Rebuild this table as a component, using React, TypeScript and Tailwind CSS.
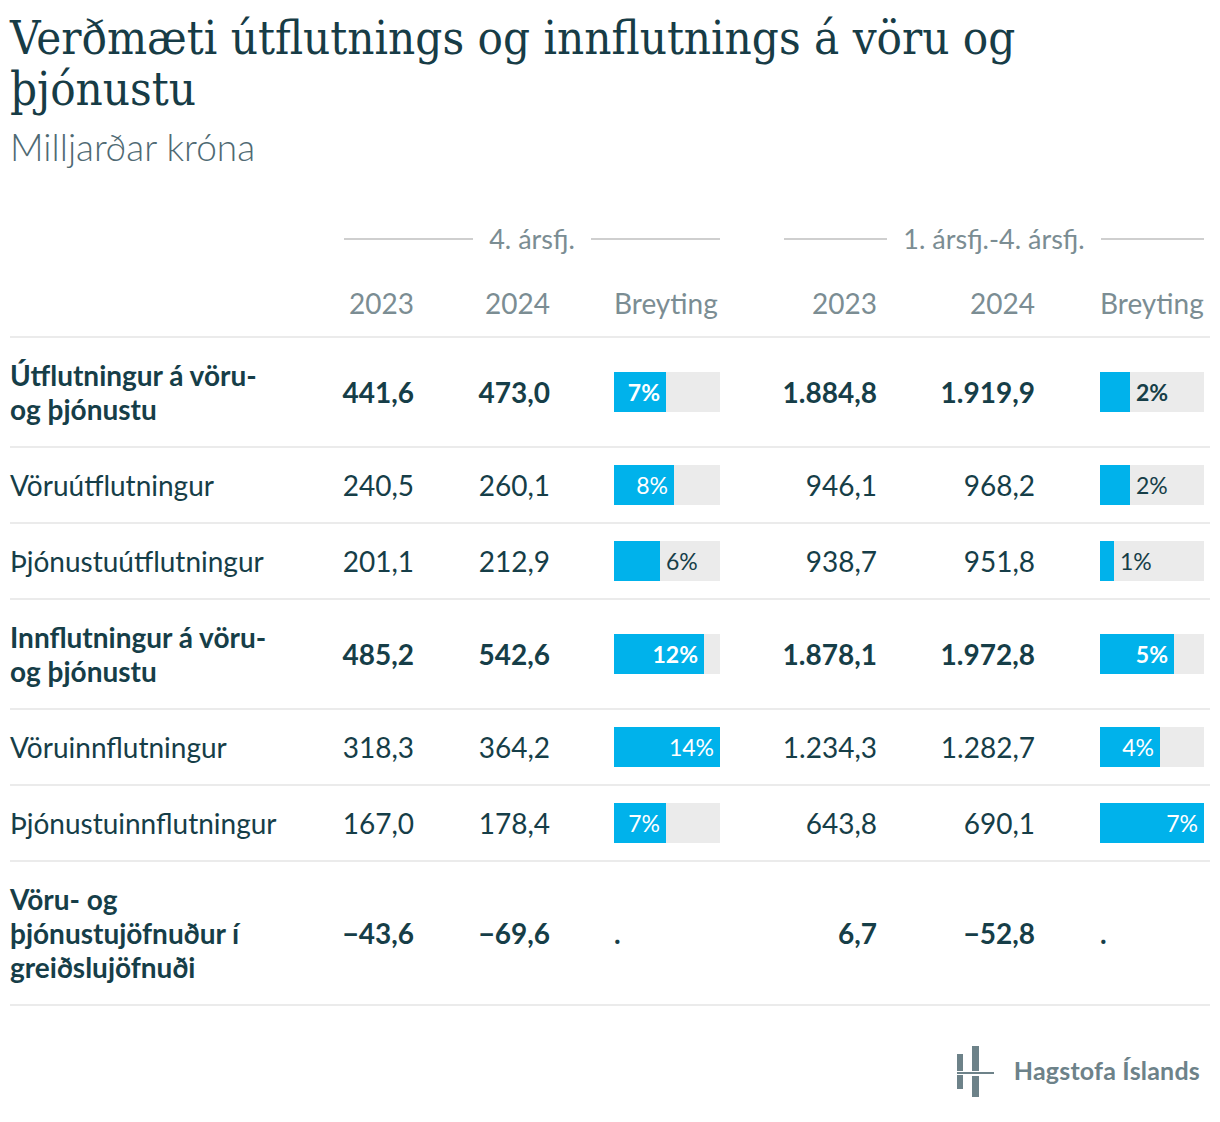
import React from 'react';

type Bar = { pct: string; w: number; inside: boolean };

interface Row {
  label: string;
  bold?: boolean;
  q23: string;
  q24: string;
  qBar: Bar | null;
  y23: string;
  y24: string;
  yBar: Bar | null;
}

const rows: Row[] = [
  {
    label: 'Útflutningur á vöru- og þjónustu',
    bold: true,
    q23: '441,6',
    q24: '473,0',
    qBar: { pct: '7%', w: 52, inside: true },
    y23: '1.884,8',
    y24: '1.919,9',
    yBar: { pct: '2%', w: 30, inside: false },
  },
  {
    label: 'Vöruútflutningur',
    q23: '240,5',
    q24: '260,1',
    qBar: { pct: '8%', w: 60, inside: true },
    y23: '946,1',
    y24: '968,2',
    yBar: { pct: '2%', w: 30, inside: false },
  },
  {
    label: 'Þjónustuútflutningur',
    q23: '201,1',
    q24: '212,9',
    qBar: { pct: '6%', w: 46, inside: false },
    y23: '938,7',
    y24: '951,8',
    yBar: { pct: '1%', w: 14, inside: false },
  },
  {
    label: 'Innflutningur á vöru- og þjónustu',
    bold: true,
    q23: '485,2',
    q24: '542,6',
    qBar: { pct: '12%', w: 90, inside: true },
    y23: '1.878,1',
    y24: '1.972,8',
    yBar: { pct: '5%', w: 74, inside: true },
  },
  {
    label: 'Vöruinnflutningur',
    q23: '318,3',
    q24: '364,2',
    qBar: { pct: '14%', w: 106, inside: true },
    y23: '1.234,3',
    y24: '1.282,7',
    yBar: { pct: '4%', w: 60, inside: true },
  },
  {
    label: 'Þjónustuinnflutningur',
    q23: '167,0',
    q24: '178,4',
    qBar: { pct: '7%', w: 52, inside: true },
    y23: '643,8',
    y24: '690,1',
    yBar: { pct: '7%', w: 104, inside: true },
  },
  {
    label: 'Vöru- og þjónustujöfnuður í greiðslujöfnuði',
    bold: true,
    q23: '−43,6',
    q24: '−69,6',
    qBar: null,
    y23: '6,7',
    y24: '−52,8',
    yBar: null,
  },
];

const cols = 'grid grid-cols-[285px_119px_136px_170px_157px_158px_169px]';

function BarCell({ bar, total, bold }: { bar: Bar | null; total: number; bold?: boolean }) {
  if (!bar) {
    return <span className="text-[28px] leading-[34px]">.</span>;
  }
  // bar is taller than the text line, it spills into the row padding
  return (
    <div className="flex h-[34px] items-center">
      <div className="flex h-10 shrink-0 bg-[#ebebeb]" style={{ width: total }}>
        <div
          className="flex h-10 items-center justify-end bg-[#00b2eb] pr-[6px]"
          style={{ width: bar.w }}
        >
          {bar.inside && (
            <span className={`text-[23px] text-white ${bold ? 'font-bold' : ''}`}>{bar.pct}</span>
          )}
        </div>
        {!bar.inside && (
          <span className={`flex items-center pl-[6px] text-[23px] ${bold ? 'font-bold' : ''}`}>
            {bar.pct}
          </span>
        )}
      </div>
    </div>
  );
}

function Logo() {
  return (
    <div className="flex items-center gap-[19px]">
      <svg width="40" height="52" viewBox="0 0 40 52">
        <rect x="2" y="9" width="6" height="17" fill="#6d8289" />
        <rect x="2" y="30" width="6" height="14" fill="#6d8289" />
        <rect x="17" y="1" width="7" height="25" fill="#6d8289" />
        <rect x="17" y="31" width="7" height="21" fill="#6d8289" />
        <rect x="2" y="27" width="37" height="2" fill="#6d8289" />
      </svg>
      <span className="text-[25px] font-bold tracking-[0.2px] text-[#6d8289]">Hagstofa Íslands</span>
    </div>
  );
}

export default function App() {
  return (
    <div className="h-[1122px] w-[1220px] bg-white px-[10px] pt-3 font-['Lato',sans-serif] text-[#163e48]">
      <h1 className="max-w-[1040px] font-['DejaVu_Serif_Condensed','DejaVu_Serif',serif] text-[47px] leading-[51px] text-[#173c46]">
        Verðmæti útflutnings og innflutnings á vöru og þjónustu
      </h1>
      <p className="mt-[13px] text-[37px] font-light leading-10 text-[#4f6a73]">Milljarðar króna</p>

      <div className="mt-[52px]">
        {/* Group headers */}
        <div className={`${cols} h-[30px] items-center text-[27px] text-[#7b8d93]`}>
          <div />
          <div className="col-span-3 flex items-center gap-4 pl-[49px]">
            <div className="h-0.5 flex-1 bg-[#cfcfcf]" />
            <span>4. ársfj.</span>
            <div className="h-0.5 flex-1 bg-[#cfcfcf]" />
          </div>
          <div className="col-span-3 flex items-center gap-4 pl-16">
            <div className="h-0.5 flex-1 bg-[#cfcfcf]" />
            <span>1. ársfj.-4. ársfj.</span>
            <div className="h-0.5 flex-1 bg-[#cfcfcf]" />
          </div>
        </div>

        {/* Year headers */}
        <div className={`${cols} mt-[37px] border-b-2 border-[#ebebeb] pb-4 text-[28px] leading-[34px] text-[#7b8d93]`}>
          <div />
          <div className="text-right">2023</div>
          <div className="text-right">2024</div>
          <div className="pl-16">Breyting</div>
          <div className="text-right">2023</div>
          <div className="text-right">2024</div>
          <div className="pl-[65px]">Breyting</div>
        </div>

        {rows.map((r) => (
          <div
            key={r.label}
            className={`${cols} items-center border-b-2 border-[#ebebeb] py-5 text-[28px] leading-[34px] ${
              r.bold ? 'font-bold' : ''
            }`}
          >
            <div className="pr-2">{r.label}</div>
            <div className="text-right">{r.q23}</div>
            <div className="text-right">{r.q24}</div>
            <div className="pl-16">
              <BarCell bar={r.qBar} total={106} bold={r.bold} />
            </div>
            <div className="text-right">{r.y23}</div>
            <div className="text-right">{r.y24}</div>
            <div className="pl-[65px]">
              <BarCell bar={r.yBar} total={104} bold={r.bold} />
            </div>
          </div>
        ))}
      </div>

      <div className="mt-[39px] flex justify-end pr-[10px]">
        <Logo />
      </div>
    </div>
  );
}
